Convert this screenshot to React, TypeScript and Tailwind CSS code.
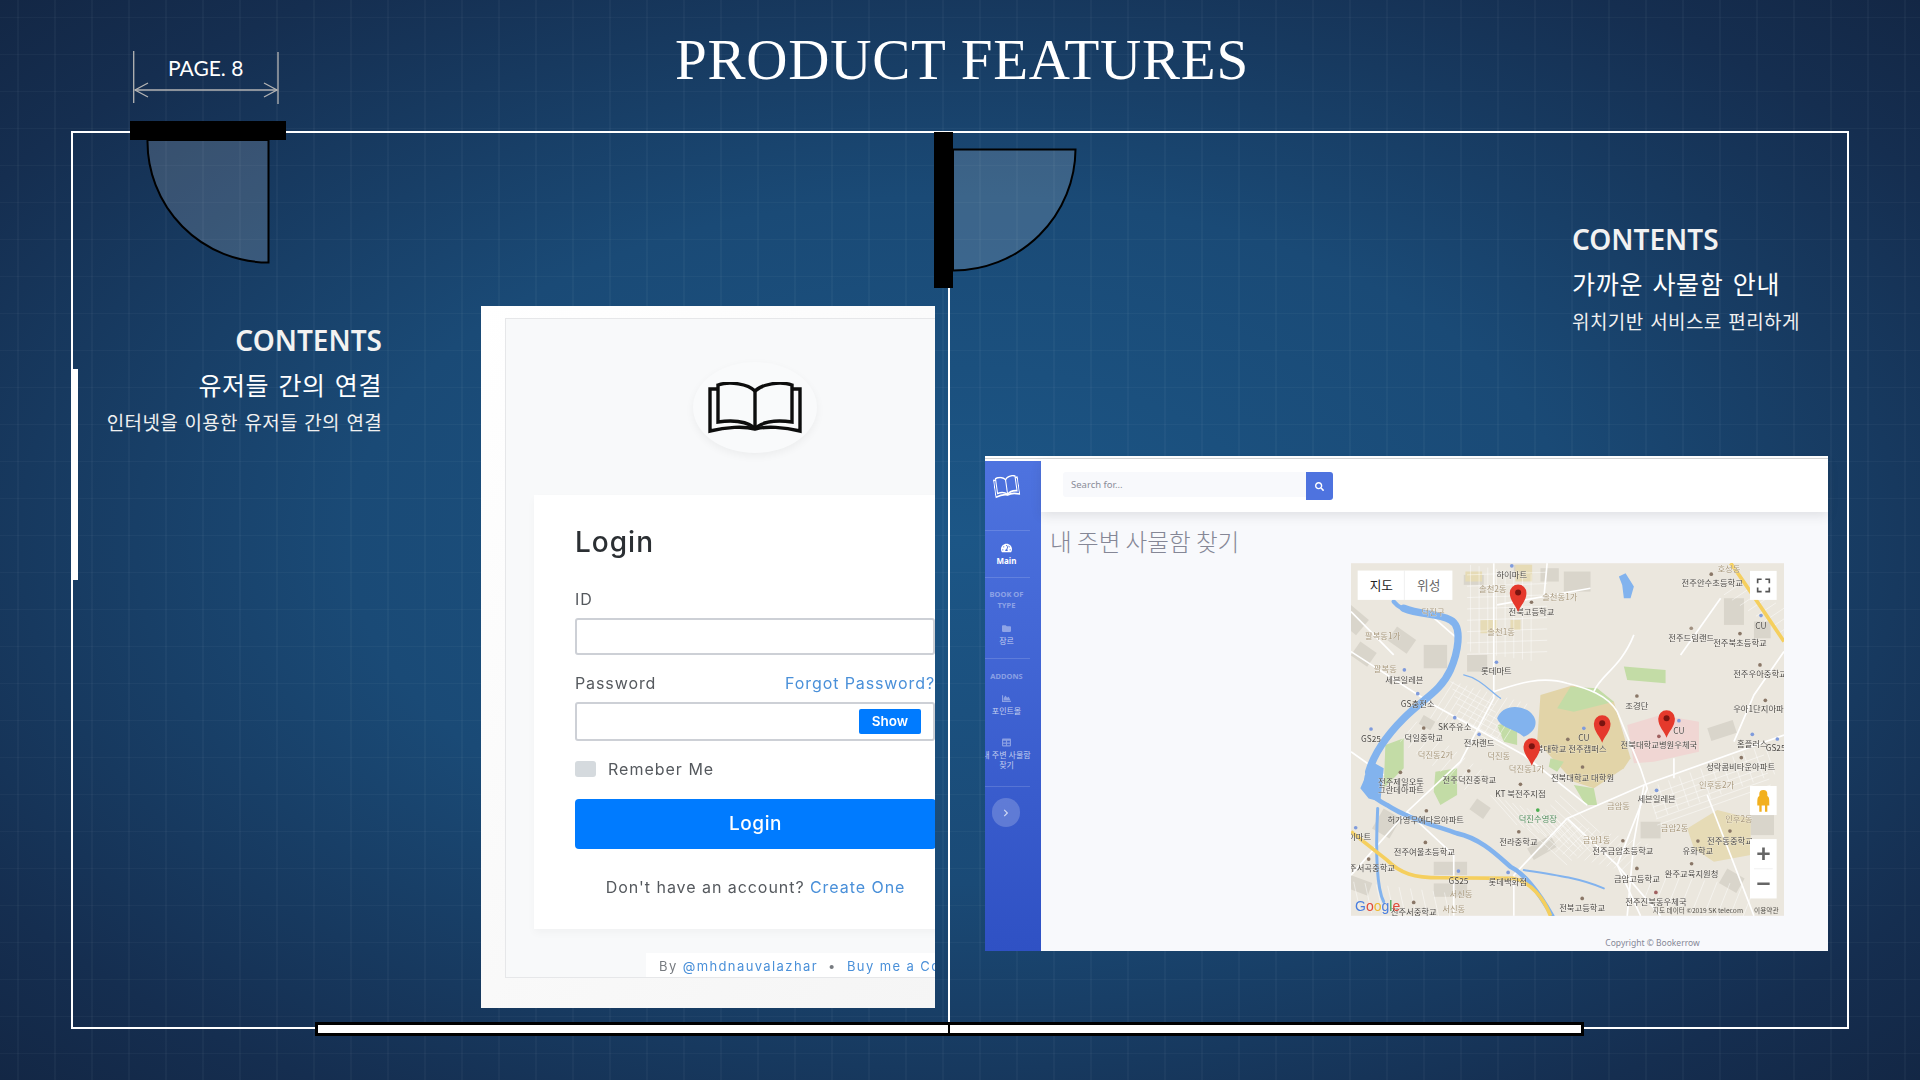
import { FaTachometerAlt, FaFolder, FaChartArea, FaTable, FaChevronRight, FaSearch } from "react-icons/fa";

const labels: [number, number, string, number?][] = [
  [514, 68, "하이마트"], [457, 112, "솔천2동", 1], [658, 134, "솔천동1가", 1], [1115, 94, "전주안수초등학교"], [1165, 50, "호성동", 1],
  [573, 180, "전북고등학교"], [278, 180, "덕진구", 1], [482, 240, "솔천1동", 1], [127, 252, "팔복동1가", 1], [1052, 258, "전주드림랜드"],
  [1198, 272, "전주북초등학교"], [1261, 222, "CU"], [468, 358, "롯데마트"], [135, 352, "팔복동", 1], [192, 383, "세븐일레븐"],
  [1258, 367, "전주우아중학교"], [232, 457, "GS충전소"], [889, 462, "조경단"], [1265, 472, "우아1단지아파트"], [343, 525, "SK주유소"],
  [250, 557, "덕일중학교"], [416, 574, "전자랜드"], [92, 560, "GS25"], [730, 558, "CU"], [1015, 536, "CU"],
  [692, 592, "북대학교 전주캠퍼스"], [955, 580, "전북대학교병원우체국"], [1235, 575, "홈플러스"], [1305, 589, "GS25"], [475, 612, "덕진동", 1],
  [285, 610, "덕진동2가", 1], [558, 652, "덕진동1가", 1], [1200, 645, "성락콤비타운아파트"], [726, 677, "전북대학교 대학원"], [387, 685, "전주덕진중학교"],
  [182, 689, "전주제일오투"], [182, 713, "그란데아파트"], [540, 725, "KT 북전주지점"], [1128, 698, "인후동2가", 1], [948, 742, "세븐일레븐"],
  [834, 762, "금암동", 1], [256, 805, "허가영무예다음아파트"], [592, 801, "덕진수영장", 2], [1195, 802, "인후2동", 1], [1002, 829, "금암2동", 1],
  [534, 870, "전라중학교"], [768, 864, "금암1동", 1], [847, 896, "전주금암초등학교"], [1168, 868, "전주동중학교"], [1072, 898, "유화학교"],
  [252, 901, "전주여울초등학교"], [95, 948, "주서곡중학교"], [1053, 965, "완주교육지원청"], [889, 980, "금암고등학교"], [354, 988, "GS25"],
  [502, 990, "롯데백화점"], [362, 1027, "서신동", 1], [725, 1068, "전북고등학교"], [946, 1050, "전주진북동우체국"], [340, 1070, "서신동", 1],
  [220, 1080, "전주서중학교"], [58, 854, "이마트"],
];

const pois: [number, number, string][] = [
  [514, 33, "#7f9bdc"], [573, 142, "#8a7767"], [1112, 58, "#8a7767"], [1052, 220, "#a09080"], [1198, 236, "#8a7767"], [1261, 182, "#7f9bdc"],
  [468, 322, "#7f9bdc"], [192, 345, "#7f9bdc"], [1258, 330, "#8a7767"], [232, 416, "#7f9bdc"], [889, 423, "#8a7767"], [1274, 436, "#8a7767"],
  [343, 488, "#7f9bdc"], [250, 519, "#8a7767"], [416, 538, "#7f9bdc"], [92, 522, "#7f9bdc"], [730, 520, "#7f9bdc"], [1015, 497, "#7f9bdc"],
  [682, 553, "#8a7767"], [955, 544, "#a06060"], [1235, 538, "#7f9bdc"], [1310, 552, "#7f9bdc"], [1202, 608, "#8a7767"], [726, 636, "#8a7767"],
  [385, 648, "#8a7767"], [180, 652, "#8a7767"], [540, 688, "#8a7767"], [948, 706, "#7f9bdc"], [258, 767, "#8a7767"], [592, 765, "#4caf50"],
  [535, 830, "#8a7767"], [847, 857, "#8a7767"], [1168, 828, "#8a7767"], [1072, 858, "#8a7767"], [255, 862, "#8a7767"], [85, 912, "#8a7767"],
  [1053, 926, "#8a7767"], [889, 940, "#8a7767"], [354, 948, "#7f9bdc"], [503, 952, "#7f9bdc"], [725, 1030, "#8a7767"], [946, 1012, "#a06060"],
  [220, 1042, "#8a7767"], [46, 818, "#7f9bdc"],
];

const blocks: [number, number, number, number, number][] = [
  [32, 150, 70, 60, 40], [60, 260, 60, 50, 35], [250, 270, 70, 70, 0], [380, 300, 60, 50, 0], [1150, 130, 60, 80, 0], [670, 50, 80, 60, 0],
  [600, 40, 55, 40, 0], [410, 730, 50, 40, 35], [130, 760, 60, 70, 30], [280, 920, 100, 40, 0], [280, 985, 100, 40, 0], [900, 800, 60, 50, 0],
  [1230, 760, 70, 80, 0], [1100, 520, 80, 40, -18], [520, 30, 50, 40, 0], [170, 215, 70, 50, 35], [370, 60, 60, 30, 0], [250, 480, 40, 30, 30],
  [1160, 940, 60, 50, 30], [560, 880, 80, 40, -30], [1240, 200, 50, 50, 0], [30, 960, 70, 40, 20],
];

const roads = [
  "M32 290 L280 450 L550 600 L740 750",
  "M460 25 L460 430 L360 620 L200 770 L32 960",
  "M460 410 C520 390 600 360 680 385 C740 400 800 420 830 470 L900 640 L920 700 L830 930 L900 1082",
  "M680 790 L910 690 L1330 540",
  "M520 960 L680 790",
  "M680 790 L830 930 L960 1082",
  "M760 410 C780 360 840 340 880 240",
  "M1330 290 L1240 420 L1180 560",
  "M32 170 L160 300",
  "M620 25 L610 130",
  "M470 150 L750 100",
  "M520 1082 L520 960",
  "M1100 720 L1240 1082",
  "M270 180 L350 250",
  "M1000 610 L1000 670",
  "M910 690 L880 860 L860 1082",
  "M200 770 L340 900 L340 1082",
  "M32 590 L130 660",
  "M1140 130 L1020 300",
];

// thin side streets in the built up parts of the map
const streets: string[] = [
  ...Array.from({ length: 12 }, (_, i) => `M${340 + i * 20} ${380 + i * 6} l-70 110`),
  ...Array.from({ length: 7 }, (_, i) => `M${330 + i * 6} ${380 + i * 22} l130 70`),
  ...Array.from({ length: 12 }, (_, i) => `M${450 + i * 22} ${720 + i * 8} l80 90`),
  ...Array.from({ length: 12 }, (_, i) => `M${600 + i * 22} ${880 + i * 6} l80 -80`),
  ...Array.from({ length: 8 }, (_, i) => `M${560 + i * 14} ${820 - i * 14} l120 110`),
  ...Array.from({ length: 12 }, (_, i) => `M${920 + i * 32} ${700 - i * 12} l30 90`),
  ...Array.from({ length: 6 }, (_, i) => `M${930 + i * 4} ${720 + i * 18} l340 -120`),
  ...Array.from({ length: 9 }, (_, i) => `M${180 + i * 24} ${560 + i * 18} l50 -60`),
  ...Array.from({ length: 9 }, (_, i) => `M${40 + i * 34} ${980 + i * 4} l20 90`),
  ...Array.from({ length: 9 }, (_, i) => `M${940 + i * 38} ${960 + i * 4} l-40 100`),
  ...Array.from({ length: 8 }, (_, i) => `M${1150 + i * 24} ${120 + i * 16} l60 -40`),
  ...Array.from({ length: 8 }, (_, i) => `M${390 + i * 26} ${30 + i * 4} l0 260`),
  ...Array.from({ length: 8 }, (_, i) => `M${380} ${60 + i * 34} l240 -8`),
];

function Marker({ x, y }: { x: number; y: number }) {
  return (
    <g transform={`translate(${x} ${y})`}>
      <path d="M0 57 C-6 38 -25 24 -25 0 A25 25 0 0 1 25 0 C25 24 6 38 0 57Z" fill="#e5392c" />
      <circle cx="0" cy="-1" r="9" fill="#7a1410" />
    </g>
  );
}

function MapView() {
  return (
    <svg viewBox="32 25 1298 1057" className="w-[433px] h-[353px] block blur-[0.4px]">
      <rect x="32" y="25" width="1298" height="1057" fill="#ebe7de" />
      {blocks.map(([x, y, w, h, r], i) => (
        <rect key={i} x={x} y={y} width={w} height={h} fill="#d9d5cb" transform={`rotate(${r} ${x} ${y})`} />
      ))}
      <path d="M600 420 L700 390 L820 440 L870 610 L850 640 L760 700 L700 680 L590 560Z" fill="#e2d4a8" />
      <path d="M690 395 L770 400 L820 440 L700 470 L650 460Z" fill="#c3dca6" />
      <path d="M630 610 L670 620 L650 650 L625 635Z M700 690 L760 700 L770 750 L735 750Z" fill="#c3dca6" />
      <path d="M285 650 L350 640 L350 720 L300 750 L280 710Z M850 335 L975 345 L975 385 L860 375Z M135 570 L190 550 L190 640 L130 700Z" fill="#c3dca6" />
      <path d="M470 510 L530 500 L530 570 L490 560Z" fill="#c3dca6" />
      <path d="M860 510 L960 480 L1075 500 L1075 590 L940 620 L880 625Z" fill="#f0d6d3" />
      <path d="M1040 820 L1130 765 L1230 790 L1230 900 L1120 920 L1060 880Z M375 50 h50 v30 h-50z M525 30 h50 v50 h-50z M420 195 h50 v40 h-50z M510 195 h30 v30 h-30z" fill="#e6dbb6" />
      <g fill="none" stroke="#ffffff" strokeOpacity="0.7" strokeWidth="2">
        {streets.map((d, i) => <path key={i} d={d} />)}
      </g>
      <g fill="none" stroke="#ffffff" strokeWidth="5">
        {roads.map((d, i) => <path key={i} d={d} />)}
      </g>
      <g fill="none" stroke="#82b3ee" strokeLinecap="round">
        <path strokeWidth="22" d="M190 160 C240 180 290 175 330 195 C370 215 350 300 330 345 C300 410 250 430 190 490 C140 540 100 600 85 650" />
        <path strokeWidth="13" d="M160 140 C180 165 200 165 230 172" />
        <path strokeWidth="14" d="M85 650 C60 700 100 730 140 750 C200 790 280 810 350 835 C420 850 470 900 510 935 C560 960 600 1020 635 1082" />
        <path strokeWidth="9" d="M112 760 C105 900 110 1000 130 1040" />
        <path strokeWidth="4" d="M370 360 C420 370 450 410 480 430" />
        <path strokeWidth="6" d="M550 945 C650 960 720 970 790 1000" />
      </g>
      <path d="M470 490 C480 460 520 445 560 465 C600 490 590 530 550 545 C520 520 480 520 470 490Z M835 65 L855 55 L880 95 L870 130 L850 130 L845 90Z M60 700 L95 620 L130 640 L120 740 L85 730Z" fill="#82b3ee" />
      <g fill="none" stroke="#f5cf5e" strokeWidth="11">
        <path d="M1170 25 C1210 80 1250 140 1330 260" />
        <path d="M32 830 L140 915 C180 955 220 968 300 968 L520 970 C570 980 610 1030 630 1082" />
      </g>
      {pois.map(([x, y, c], i) => <circle key={i} cx={x} cy={y} r="5.5" fill={c} />)}
      <g fontFamily="'Noto Sans CJK KR', sans-serif" fontSize="25" textAnchor="middle">
        {labels.map(([x, y, t, kind], i) => (
          <text key={i} x={x} y={y} fill={kind === 1 ? "#a8987c" : kind === 2 ? "#4d8a58" : "#4a4742"} stroke="#ffffff" strokeOpacity="0.5" strokeWidth="2" paintOrder="stroke">{t}</text>
        ))}
      </g>
      <g fontFamily="'Noto Sans CJK KR', sans-serif" fontSize="20" fill="#55524c" textAnchor="middle">
        <text x="1072" y="1074">지도 데이터 ©2019 SK telecom</text>
        <text x="1277" y="1074">이용약관</text>
      </g>
      <g fontFamily="'Liberation Sans', sans-serif" fontSize="42" fontWeight="400">
        <text x="44" y="1068" fill="#4a7fe0">G<tspan fill="#e04a3a">o</tspan><tspan fill="#eeb92e">o</tspan><tspan fill="#4a7fe0">g</tspan><tspan fill="#3fa24f">l</tspan><tspan fill="#e04a3a">e</tspan></text>
      </g>
      <Marker x={533} y={114} />
      <Marker x={785} y={506} />
      <Marker x={574} y={575} />
      <Marker x={978} y={491} />
      <rect x="52" y="47" width="284" height="88" fill="#fff" />
      <line x1="192" y1="47" x2="192" y2="135" stroke="#e8e8e8" strokeWidth="2" />
      <g fontFamily="'Noto Sans CJK KR', sans-serif" fontSize="38" textAnchor="middle">
        <text x="123" y="104" fill="#222">지도</text>
        <text x="265" y="104" fill="#666">위성</text>
      </g>
      <rect x="1228" y="48" width="80" height="87" fill="#fff" />
      <path d="M1251 85 V73 H1263 M1274 73 H1286 V85 M1286 98 V110 H1274 M1263 110 H1251 V98" fill="none" stroke="#555" strokeWidth="5" />
      <rect x="1228" y="693" width="80" height="87" fill="#fff" />
      <path d="M1268 705 a12 12 0 0 1 12 12 v6 c6 3 6 10 6 28 h-6 v19 h-7 v-19 h-10 v19 h-7 v-19 h-6 c0 -18 0 -25 6 -28 v-6 a12 12 0 0 1 12 -12z" fill="#f2b01e" />
      <rect x="1228" y="852" width="80" height="178" fill="#fff" />
      <line x1="1240" y1="941" x2="1296" y2="941" stroke="#e8e8e8" strokeWidth="2" />
      <path d="M1250 896 H1287 M1268.5 877 V915 M1250 986 H1287" stroke="#666" strokeWidth="8" />
    </svg>
  );
}

function BookIcon({ className, color, width }: { className: string; color: string; width: number }) {
  return (
    <svg viewBox="0 0 94 52" preserveAspectRatio="none" className={className} fill="none" stroke={color} strokeWidth={width}>
      <path d="M10 3 C22 -1 40 2 47 9 C54 2 72 -1 84 3 V40 C70 38 56 39 47 46 C38 39 24 38 10 40Z" />
      <path d="M47 9 V46" />
      <path d="M10 7 H2 V49 C18 45 36 44 47 47 C58 44 76 45 92 49 V7 H84" />
    </svg>
  );
}

function LoginShot() {
  return (
    <div className="w-[454px] h-[702px] pt-[12px] pl-[24px] bg-[linear-gradient(135deg,#ffffff,#f5f5f5)] font-['Inter',sans-serif] blur-[0.4px]">
      <div className="w-[430px] h-[660px] overflow-hidden border-l border-t border-b border-[#e6e7e9] bg-[#f8f9fa]">
        <div className="mt-[43px] ml-[187px] w-[124px] h-[91px] rounded-[50%] bg-[#f9fafb] shadow-[0_3px_8px_rgba(0,0,0,0.05)] flex items-center justify-center">
          <BookIcon className="w-[94px] h-[52px]" color="#0d0d0d" width={3.4} />
        </div>
        <div className="mt-[42px] ml-[28px] w-[444px] h-[434px] bg-white pt-[30px] pl-[41px] shadow-[0_4px_8px_rgba(0,0,0,0.03)]">
          <div className="text-[28px] leading-[34px] font-medium tracking-[1px] text-[#2b2f33]">Login</div>
          <div className="mt-[31px] text-[16px] leading-[18px] tracking-[0.9px] text-[#55595e]">ID</div>
          <div className="mt-[10px] w-[360px] h-[37px] rounded-[3px] border-2 border-[#cdd0d6] bg-white" />
          <div className="mt-[19px] w-[360px] flex justify-between text-[16px] leading-[18px] tracking-[0.9px]">
            <span className="text-[#55595e]">Password</span>
            <span className="text-[#4a90d9] whitespace-nowrap">Forgot Password?</span>
          </div>
          <div className="mt-[10px] w-[360px] h-[39px] rounded-[3px] border-2 border-[#cdd0d6] bg-white flex items-center justify-end pr-[12px]">
            <div className="w-[62px] h-[25px] rounded-[2px] bg-[#007bff] text-white text-[13.5px] font-semibold flex items-center justify-center">Show</div>
          </div>
          <div className="mt-[16px] flex items-center gap-[12px]">
            <div className="w-[21px] h-[16px] rounded-[3px] bg-[#d5dade]" />
            <span className="text-[16px] tracking-[1px] text-[#55595e]">Remeber Me</span>
          </div>
          <div className="mt-[18px] w-[361px] h-[50px] rounded-[4px] bg-[#007bff] text-white text-[19px] font-medium tracking-[0.6px] flex items-center justify-center">Login</div>
          <div className="mt-[27px] w-[361px] text-center text-[16px] leading-[22px] tracking-[0.95px] text-[#55595e] whitespace-nowrap">
            Don't have an account? <span className="text-[#4a90d9]">Create One</span>
          </div>
        </div>
        <div className="mt-[24px] ml-[140px] w-[300px] h-[26px] bg-white pl-[13px] pt-[3px] text-[13px] leading-[20px] tracking-[1.4px] text-[#777b80] whitespace-nowrap">
          By <span className="text-[#4a90d9]">@mhdnauvalazhar</span> &nbsp;•&nbsp; <span className="text-[#4a90d9]">Buy me a Coffee</span>
        </div>
      </div>
    </div>
  );
}

function SideItem({ icon, label, active }: { icon: React.ReactNode; label: React.ReactNode; active?: boolean }) {
  return (
    <div className={`flex flex-col items-center text-center ${active ? "text-white" : "text-white/70"}`}>
      {icon}
      <div className={`mt-[3px] text-[8px] leading-[10.5px] whitespace-nowrap ${active ? "font-bold" : ""}`}>{label}</div>
    </div>
  );
}

function Divider() {
  return <div className="h-px w-[45px] shrink-0 bg-white/15" />;
}

function AppShot() {
  return (
    <div className="w-[843px] h-[495px] flex flex-col bg-white font-['Noto_Sans','Noto_Sans_CJK_KR',sans-serif] blur-[0.3px]">
      <div className="h-[3px] shrink-0 border-b border-[#d5d5d5] bg-white" />
      <div className="flex-1 flex min-h-0">
        <div className="w-[56px] mt-[2px] bg-[linear-gradient(180deg,#4e73df,#2f51c4)] overflow-hidden flex flex-col">
          <div className="h-[69px] pt-[15px] pl-[9px]">
            <BookIcon className="w-[25px] h-[21px] -rotate-[8deg]" color="#ffffff" width={4} />
          </div>
          <Divider />
          <div className="w-[43px] h-[46px] pt-[12px]">
            <SideItem active icon={<FaTachometerAlt className="w-[11px] h-[10px]" />} label="Main" />
          </div>
          <Divider />
          <div className="w-[43px] h-[80px] pt-[11px] flex flex-col items-center">
            <div className="text-[7.5px] leading-[11px] font-bold text-white/40 text-center whitespace-nowrap">BOOK OF<br />TYPE</div>
            <div className="mt-[13px]">
              <SideItem icon={<FaFolder className="w-[11px] h-[9px] text-white/40" />} label="장르" />
            </div>
          </div>
          <Divider />
          <div className="w-[43px] h-[127px] pt-[12px] flex flex-col items-center">
            <div className="text-[7.5px] leading-[11px] font-bold text-white/40">ADDONS</div>
            <div className="mt-[12px]">
              <SideItem icon={<FaChartArea className="w-[11px] h-[9px] text-white/40" />} label="포인트몰" />
            </div>
            <div className="mt-[21px] flex justify-center">
              <SideItem icon={<FaTable className="w-[11px] h-[9px] text-white/40" />} label={<>내 주변 사물함<br />찾기</>} />
            </div>
          </div>
          <Divider />
          <div className="mt-[11px] ml-[7px] w-[28px] h-[29px] rounded-full bg-white/20 flex items-center justify-center">
            <FaChevronRight className="w-[6px] h-[8px] text-white/70" />
          </div>
        </div>
        <div className="flex-1 flex flex-col bg-[#f8f9fc] min-w-0">
          <div className="h-[53px] shrink-0 bg-white pl-[22px] pt-[13px] flex items-start shadow-[0_4px_10px_rgba(58,59,69,0.12)]">
            <div className="w-[243px] h-[25px] bg-[#f8f9fc] rounded-l-[3px] pl-[8px] text-[9.5px] leading-[25px] text-[#8a8c99]">Search for...</div>
            <div className="w-[27px] h-[28px] rounded-r-[3px] bg-[#4e73df] flex items-center justify-center">
              <FaSearch className="w-[9px] h-[9px] text-white" />
            </div>
          </div>
          <div className="pl-[9px] pt-[12px] text-[23.6px] leading-[34px] font-light text-[#858796] font-['Noto_Sans_CJK_KR',sans-serif]">내 주변 사물함 찾기</div>
          <div className="ml-[310px] mt-[5px]">
            <MapView />
          </div>
          <div className="mt-[21px] text-center text-[8.5px] leading-[12px] text-[#858796] pl-[436px]">Copyright © Bookerrow</div>
        </div>
      </div>
    </div>
  );
}

export default function App() {
  return (
    <div className="relative w-[1920px] h-[1080px] overflow-hidden bg-[linear-gradient(rgba(255,255,255,0.03)_1.5px,transparent_1.5px),linear-gradient(90deg,rgba(255,255,255,0.03)_2px,transparent_2px),radial-gradient(ellipse_at_center,#1c5686_0%,#1a4a76_45%,#152e50_85%,#132745_100%)] bg-[size:37px_37px,37px_37px,100%_100%] bg-[position:17px_17px,17px_17px,0_0] font-['Noto_Sans','Noto_Sans_CJK_KR',sans-serif]">
      {/* header */}
      <div className="h-[131px] flex items-start">
        <div className="relative ml-[133px] mt-[51px] w-[147px] h-[54px]">
          <svg viewBox="0 0 147 54" className="w-[147px] h-[54px] block" fill="none" stroke="#b4b4b4" strokeWidth="1.3">
            <path d="M0.7 0 V52 M145 1 V53" />
            <path d="M2 39 H144" />
            <path d="M15 32 L2 39 L15 46 M131 32 L144 39 L131 46" />
          </svg>
          <div className="absolute left-[35px] top-[4px] font-['Lato',sans-serif] text-[21px] leading-[26px] text-white whitespace-nowrap">PAGE. 8</div>
        </div>
        <h1 className="ml-[395px] mt-[26px] font-['Liberation_Serif',serif] text-[57px] leading-[68px] tracking-[0.8px] text-white whitespace-nowrap">PRODUCT FEATURES</h1>
      </div>

      {/* floor plan */}
      <div className="relative ml-[71px] w-[1778px] h-[898px] border-2 border-white flex">
        <div className="w-[877px] flex items-start">
          <div className="w-[309px] mt-[188px] text-right text-white">
            <div className="text-[28px] leading-[38px] font-semibold text-[#f2f2f2]">CONTENTS</div>
            <div className="mt-[7px] text-[25px] leading-[36px] font-['Noto_Sans_CJK_KR',sans-serif] font-normal tracking-[0.6px] [word-spacing:3px]">유저들 간의 연결</div>
            <div className="mt-[6px] text-[19px] leading-[28px] font-['Noto_Sans_CJK_KR',sans-serif] font-normal tracking-[0.3px] [word-spacing:2px] text-[#f0f0f0]">인터넷을 이용한 유저들 간의 연결</div>
          </div>
          <div className="ml-[99px] mt-[173px]">
            <LoginShot />
          </div>
        </div>
        <div className="flex-1 flex flex-col items-start">
          <div className="ml-[622px] mt-[87px] h-[236px] text-white">
            <div className="text-[28px] leading-[38px] font-semibold text-[#f2f2f2]">CONTENTS</div>
            <div className="mt-[7px] text-[25px] leading-[36px] font-['Noto_Sans_CJK_KR',sans-serif] font-normal tracking-[0.7px] [word-spacing:3px] whitespace-nowrap">가까운 사물함 안내</div>
            <div className="mt-[6px] text-[19px] leading-[28px] font-['Noto_Sans_CJK_KR',sans-serif] font-normal tracking-[0.4px] [word-spacing:2px] text-[#f0f0f0] whitespace-nowrap">위치기반 서비스로 편리하게</div>
          </div>
          <div className="ml-[35px]">
            <AppShot />
          </div>
        </div>
      </div>

      {/* openings and doors on the plan */}
      <div className="absolute left-[948px] top-[288px] w-[2px] h-[740px] bg-white" />
      <div className="absolute left-[72px] top-[369px] w-[6px] h-[211px] bg-white" />
      <div className="absolute left-[130px] top-[121px] w-[156px] h-[19px] bg-black" />
      <div className="absolute left-[934px] top-[132px] w-[19px] h-[156px] bg-black" />
      <svg className="absolute left-[145px] top-[139px] w-[126px] h-[126px]" viewBox="0 0 126 126">
        <path d="M2.5 1 A121 121 0 0 0 123.5 123.5 V1Z" fill="#ffffff" fillOpacity="0.15" stroke="#000000" strokeWidth="2" />
      </svg>
      <svg className="absolute left-[952px] top-[148px] w-[126px] h-[126px]" viewBox="0 0 126 126">
        <path d="M1 1.5 H123.5 A122 122 0 0 1 1 122.5Z" fill="#ffffff" fillOpacity="0.15" stroke="#000000" strokeWidth="2" />
      </svg>
      <div className="absolute left-[315px] top-[1022px] w-[1269px] h-[14px] border-[3px] border-black bg-white" />
      <div className="absolute left-[948px] top-[1025px] w-[2px] h-[8px] bg-black" />
    </div>
  );
}
